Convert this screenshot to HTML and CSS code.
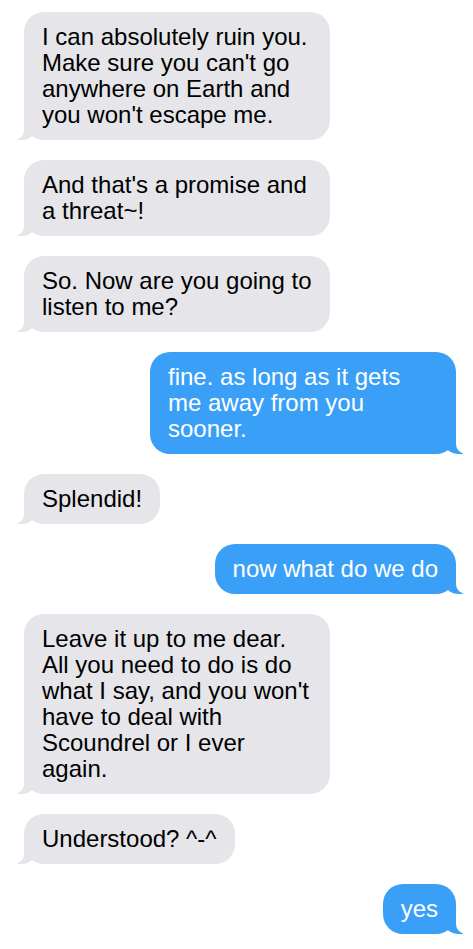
FILE: index.html
```html
<!DOCTYPE html>
<html lang="en">
  <head>
    <meta charset="UTF-8" />
    <meta name="viewport" content="width=device-width, initial-scale=1.0" />
    <title>Messages</title>
    <link rel="stylesheet" href="styles.css">
  </head>
  <body>
    <div class="chat">
      <p class="msg them">I can absolutely ruin you. Make sure you can't go anywhere on Earth and you won't escape me.</p>
      <p class="msg them">And that's a promise and a threat~!</p>
      <p class="msg them">So. Now are you going to listen to me?</p>
      <p class="msg me">fine. as long as it gets me away from you sooner.</p>
      <p class="msg them">Splendid!</p>
      <p class="msg me">now what do we do</p>
      <p class="msg them">Leave it up to me dear. All you need to do is do what I say, and you won't have to deal with Scoundrel or I ever again.</p>
      <p class="msg them">Understood? ^-^</p>
      <p class="msg me">yes</p>
    </div>
  </body>
</html>
```

FILE: styles.css
```css
body {
  margin: 0;
  background: #fff;
  font-family: "Liberation Sans", Arial, sans-serif;
}
.chat {
  display: flex;
  flex-direction: column;
  gap: 20px;
  padding: 12px 17px 12px 24px;
}
.msg {
  position: relative;
  margin: 0;
  box-sizing: border-box;
  width: fit-content;
  max-width: 306px;
  padding: 12px 18px;
  border-radius: 20px;
  font-size: 24px;
  line-height: 26px;
}
.msg::before,
.msg::after {
  content: "";
  position: absolute;
  bottom: 0;
  height: 25px;
}
.them {
  align-self: flex-start;
  background: #e5e5ea;
  color: #000;
}
.them::before {
  left: -7px;
  width: 20px;
  background: #e5e5ea;
  border-bottom-right-radius: 16px 14px;
}
.them::after {
  left: -26px;
  width: 26px;
  background: #fff;
  border-bottom-right-radius: 10px;
}
.me {
  align-self: flex-end;
  background: #3a9ff6;
  color: #fff;
}
.me::before {
  right: -7px;
  width: 20px;
  background: #3a9ff6;
  border-bottom-left-radius: 16px 14px;
}
.me::after {
  right: -26px;
  width: 26px;
  background: #fff;
  border-bottom-left-radius: 10px;
}
```
